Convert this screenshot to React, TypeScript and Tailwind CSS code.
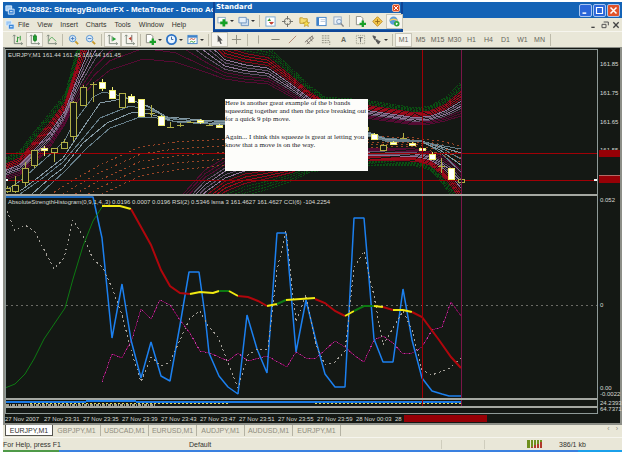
import type { ReactNode } from "react";
import clsx from "clsx";

type Point = [number, number];
// x, y of the outermost line, y of the innermost line
type BandPoint = [number, number, number];
// x, body top, body bottom, wick top, wick bottom, filled
type Candle = [number, number, number, number, number, boolean];

const MENU = ["File", "View", "Insert", "Charts", "Tools", "Window", "Help"];
const PERIODS = ["M1", "M5", "M15", "M30", "H1", "H4", "D1", "W1", "MN"];
const TABS = ["EURJPY,M1", "GBPJPY,M1", "USDCAD,M1", "EURUSD,M1", "AUDJPY,M1", "AUDUSD,M1", "EURJPY,M1"];
const DATES = [
  "27 Nov 2007",
  "27 Nov 23:31",
  "27 Nov 23:35",
  "27 Nov 23:39",
  "27 Nov 23:43",
  "27 Nov 23:47",
  "27 Nov 23:51",
  "27 Nov 23:55",
  "27 Nov 23:59",
  "28 Nov 00:03",
];

const UPPER: BandPoint[] = [
  [5, 158, 180], [20, 151, 175], [35, 131, 163], [50, 113, 147], [65, 94, 124], [70, 76, 114],
  [80, 36, 98], [95, -25, 82], [110, -60, 70], [143, -90, 59], [175, -70, 62], [205, 0, 72],
  [225, 34, 79], [245, 42, 82], [268, 47, 84], [290, 67, 96], [310, 86, 108], [325, 97, 113],
  [365, 100, 118], [415, 108, 125], [430, 106, 124], [445, 98, 121], [461, 82, 116],
];

const LOWER: BandPoint[] = [
  [165, 260, 215], [185, 240, 192], [205, 222, 170], [225, 205, 158], [245, 196, 152],
  [265, 190, 152], [290, 182, 150], [310, 172, 150], [365, 165, 148], [415, 166, 149],
  [430, 170, 152], [440, 180, 155], [450, 194, 160], [461, 212, 170],
];

const DOTTED: BandPoint[] = [
  [50, 195, 225], [70, 182, 212], [100, 165, 195], [140, 147, 176], [175, 142, 170],
  [210, 140, 167], [260, 138, 160], [365, 136, 148], [415, 138, 146], [440, 141, 154], [461, 146, 162],
];

const AVERAGES: Point[][] = [
  [[5, 191], [20, 181], [35, 168], [55, 150], [65, 140], [73, 124], [93, 97], [103, 92], [117, 95], [133, 100], [150, 108], [167, 118], [187, 120], [225, 121], [365, 131], [385, 138], [422, 141], [440, 152], [461, 172]],
  [[20, 191], [35, 180], [63, 158], [83, 128], [100, 103], [127, 98], [150, 107], [167, 117], [225, 122], [365, 132], [385, 139], [422, 142], [440, 150], [461, 165]],
  [[20, 194], [40, 180], [63, 162], [80, 142], [100, 118], [130, 106], [150, 110], [173, 119], [225, 123], [365, 133], [385, 140], [422, 141], [445, 150], [461, 159]],
  [[32, 194], [50, 178], [63, 168], [83, 143], [107, 123], [133, 112], [150, 114], [173, 121], [225, 124], [365, 134], [385, 141], [422, 141], [461, 153]],
  [[40, 194], [65, 171], [87, 148], [110, 128], [140, 117], [157, 118], [177, 122], [225, 125], [365, 135], [385, 141], [422, 142], [461, 149]],
];

const CANDLES: Candle[] = [
  [7, 188, 191, 186, 193, false], [15, 185, 191, 176, 193, false], [25, 168, 182, 162, 186, false],
  [34, 150, 165, 150, 168, false], [44, 148, 150, 146, 156, true], [54, 148, 152, 148, 162, false],
  [64, 142, 148, 139, 148, false], [73, 102, 136, 101, 141, false], [83, 87, 105, 85, 105, false],
  [93, 84, 84, 82, 102, false], [102, 82, 88, 79, 91, true], [112, 90, 98, 87, 99, true],
  [122, 93, 107, 93, 108, false], [131, 96, 102, 94, 103, true], [141, 99, 116, 99, 117, true],
  [151, 113, 113, 105, 117, false], [161, 116, 125, 115, 125, true], [170, 127, 127, 122, 127, false],
  [180, 125, 125, 123, 127, false], [190, 122, 122, 121, 123, false], [200, 120, 122, 119, 124, true],
  [209, 125, 125, 124, 126, false], [219, 125, 127, 124, 127, true], [365, 127, 130, 127, 130, false],
  [374, 134, 139, 133, 139, true], [383, 145, 150, 144, 150, false], [393, 142, 144, 141, 144, true],
  [403, 138, 138, 133, 139, false], [412, 143, 145, 142, 145, true], [422, 148, 150, 146, 151, true],
  [432, 154, 159, 152, 160, true], [441, 166, 166, 158, 173, false], [451, 168, 179, 168, 180, true],
  [461, 179, 182, 178, 182, false],
];

const RSI: Point[] = [
  [5, 197], [93, 197], [102, 238], [112, 338], [122, 284], [131, 340], [141, 378], [151, 342],
  [161, 376], [170, 381], [180, 325], [189, 272], [199, 272], [205, 315], [209, 353], [219, 376],
  [228, 387], [238, 394], [247, 315], [257, 349], [267, 373], [277, 233], [286, 233], [296, 352],
  [306, 300], [316, 341], [325, 374], [335, 387], [345, 387], [354, 218], [364, 218], [374, 339],
  [383, 362], [393, 362], [403, 289], [412, 340], [422, 378], [432, 391], [442, 394], [449, 396], [461, 396],
];

const CCI: Point[] = [
  [5, 206], [15, 231], [25, 225], [35, 232], [54, 269], [64, 258], [73, 220], [83, 236], [93, 259],
  [103, 268], [112, 288], [122, 315], [131, 350], [141, 382], [151, 357], [161, 366], [170, 362],
  [180, 340], [190, 318], [200, 311], [208, 326], [218, 337], [228, 363], [238, 388], [248, 355],
  [258, 349], [268, 349], [277, 270], [286, 231], [296, 322], [306, 295], [316, 345], [325, 365],
  [335, 362], [345, 351], [354, 268], [364, 251], [374, 296], [383, 345], [393, 328], [403, 311],
  [412, 330], [422, 370], [432, 375], [450, 368], [461, 358],
];

const LSMA: Point[] = [
  [102, 382], [112, 354], [122, 358], [132, 339], [141, 309], [151, 319], [160, 300], [170, 305],
  [180, 320], [190, 333], [200, 351], [210, 353], [228, 361], [238, 353], [248, 361], [267, 356],
  [287, 367], [296, 352], [306, 358], [316, 358], [325, 350], [335, 341], [345, 347], [355, 356],
  [364, 362], [374, 340], [383, 336], [393, 343], [403, 354], [412, 353], [422, 347], [432, 330],
  [442, 327], [451, 302], [461, 316],
];

const STRENGTH: { color: string; points: Point[] }[] = [
  { color: "#0d7a12", points: [[5, 388], [15, 384], [25, 374], [34, 359], [44, 339], [65, 308], [73, 279], [83, 246], [93, 221], [102, 207]] },
  { color: "#f2ea12", points: [[102, 206], [120, 206], [131, 209]] },
  { color: "#b0060c", points: [[131, 209], [151, 245], [161, 270], [170, 286], [180, 293], [190, 294]] },
  { color: "#f2ea12", points: [[190, 294], [200, 292], [213, 293], [219, 291]] },
  { color: "#0d7a12", points: [[219, 291], [229, 291]] },
  { color: "#f2ea12", points: [[229, 291], [238, 296]] },
  { color: "#b0060c", points: [[238, 296], [248, 297], [258, 301], [267, 306]] },
  { color: "#f2ea12", points: [[267, 306], [277, 304]] },
  { color: "#0d7a12", points: [[277, 304], [286, 300]] },
  { color: "#f2ea12", points: [[286, 300], [315, 298]] },
  { color: "#b0060c", points: [[315, 299], [325, 303], [335, 311], [345, 316]] },
  { color: "#f2ea12", points: [[345, 316], [354, 311]] },
  { color: "#0d7a12", points: [[354, 311], [364, 306], [374, 306]] },
  { color: "#f2ea12", points: [[374, 306], [383, 307]] },
  { color: "#b0060c", points: [[383, 307], [393, 310]] },
  { color: "#f2ea12", points: [[393, 310], [403, 310], [412, 312]] },
  { color: "#b0060c", points: [[412, 312], [422, 317], [439, 340], [451, 357], [461, 368]] },
];

const BAND_COLORS = [
  "#0a4d12", "#0a4d12", "#0a4d12", "#0a4d12",
  "#84081a", "#9c0a1a", "#9c0a1a", "#84081a",
  "#8f7496", "#64506a", "#8f7496", "#64506a",
  "#540b33", "#540b33", "#540b33",
];

const toPoints = (points: Point[]) => points.map((p) => p.join(",")).join(" ");

const blend = (band: BandPoint[], t: number) =>
  toPoints(band.map(([x, a, b]) => [x, Math.round((a + (b - a) * t) * 10) / 10]));

function Bands({ band }: { band: BandPoint[] }) {
  return (
    <g>
      {BAND_COLORS.map((color, i) => (
        <polyline
          key={i}
          points={blend(band, i / (BAND_COLORS.length - 1))}
          stroke={color}
          strokeDasharray={i < 4 ? "2 1" : undefined}
        />
      ))}
    </g>
  );
}

function Plot({ top, height, className, children }: { top: number; height: number; className: string; children: ReactNode }) {
  return (
    <svg
      viewBox={`6 ${top} 591 ${height}`}
      preserveAspectRatio="none"
      fill="none"
      shapeRendering="crispEdges"
      className={clsx("block w-full", className)}
    >
      {children}
      <path d={`M422.5 ${top}v${height}`} stroke="#a00006" />
      <path d={`M461.5 ${top}v${height}`} stroke="#7a1648" />
    </svg>
  );
}

function PricePlot() {
  return (
    <Plot top={50} height={144} className="h-[144px]">
      <Bands band={UPPER} />
      <Bands band={LOWER} />
      {[0, 1, 2, 3, 4].map((i) => (
        <polyline key={i} points={blend(DOTTED, i / 4)} stroke="#9a4526" strokeDasharray="2 3" />
      ))}
      {AVERAGES.map((line, i) => (
        <polyline key={i} points={toPoints(line)} stroke={i % 2 ? "#8499a3" : "#657d88"} />
      ))}
      <path d="M6 153.5h591M6 180.5h591" stroke="#a00006" />
      {CANDLES.map(([x, top, bottom, high, low, filled]) => (
        <g key={x} stroke={filled ? "#f0ee70" : "#b0ae46"}>
          <path d={`M${x + 0.5} ${high}V${low}`} />
          {top === bottom ? (
            <path d={`M${x - 3} ${top + 0.5}h7`} />
          ) : (
            <rect x={x - 2.5} y={top + 0.5} width="6" height={bottom - top} fill={filled ? "#fff" : "#141814"} />
          )}
        </g>
      ))}
      <path d="M6 180h2M594 180h3" stroke="#fff" strokeWidth="2" />
    </Plot>
  );
}

function StrengthPlot() {
  return (
    <Plot top={196} height={202} className="h-[202px]">
      <path d="M6 305.5h591" stroke="#6b6b66" strokeDasharray="2 3" />
      <polyline points={toPoints(LSMA)} stroke="#6e0d4e" />
      <polyline points={toPoints(LSMA)} stroke="#c03aa4" strokeDasharray="1 4" />
      <polyline points={toPoints(RSI)} stroke="#1c80f0" strokeWidth="1.5" strokeLinejoin="bevel" shapeRendering="auto" />
      <polyline points={toPoints(CCI)} stroke="#a39f98" strokeDasharray="2 3" />
      {STRENGTH.map(({ color, points }, i) => (
        <polyline key={i} points={toPoints(points)} stroke={color} strokeWidth={i === 0 ? 1 : 2} shapeRendering="auto" />
      ))}
    </Plot>
  );
}

function Icon({ children, className }: { children: ReactNode; className?: string }) {
  return (
    <svg viewBox="0 0 12 12" fill="none" className={clsx("shrink-0", className)}>
      {children}
    </svg>
  );
}

const axes = <path d="M2.5 1v9.500h9M1 2.500l1.500-1.500L4 2.500M10 9l1.500 1.500L10 12" stroke="#7a867a" />;
const plus = <path d="M8.500 5v7M5 8.500h7" stroke="#18a028" strokeWidth="2.500" />;
const sheet = <path d="M1.500.5h5l2 2v7h-7z" fill="#fff" stroke="#8a8a80" />;

const ICONS = {
  bars: <>{axes}<path d="M6 3v6M6 4h2M4.500 8H6M9 2v5" stroke="#2c9a35" /></>,
  candles: <>{axes}<path d="M6.500 0v9" stroke="#157a20" /><path d="M5 2h3v5H5z" fill="#22a636" stroke="#157a20" /></>,
  line: <>{axes}<path d="M3 8c2-5 4-5 5-3l3 3" stroke="#4aa552" /></>,
  zoomIn: <><circle cx="5" cy="5" r="3.500" fill="#dcebf8" stroke="#4f8fd0" /><path d="M3 5h4M5 3v4" stroke="#3f78c0" /><path d="m8 8 3 3" stroke="#c69a2c" strokeWidth="2" /></>,
  zoomOut: <><circle cx="5" cy="5" r="3.500" fill="#dcebf8" stroke="#4f8fd0" /><path d="M3 5h4" stroke="#3f78c0" /><path d="m8 8 3 3" stroke="#c69a2c" strokeWidth="2" /></>,
  scroll: <>{axes}<path d="M5.500 2v6" stroke="#888" /><path d="M6 3l4 2.500L6 8z" fill="#24a034" /></>,
  shift: <>{axes}<path d="M8.500 1v8" stroke="#666" /><path d="M8 3v4L5 5z" fill="#c23a28" /></>,
  addSheet: <>{sheet}{plus}</>,
  clock: <><circle cx="6" cy="6" r="5" fill="#eaf4ff" stroke="#2c72c4" strokeWidth="2" /><path d="M6 3v3h2" stroke="#2c5d9a" /></>,
  template: <><rect x="1" y="1.500" width="10" height="9" fill="#fff" stroke="#3f82c8" /><path d="M1 3h10" stroke="#3f82c8" strokeWidth="2" /><path d="m3 6 2-1 2 1 2-1" stroke="#c24a30" /><path d="m3 9 2-1 2 1 2-1" stroke="#2c9a35" /></>,
  cursor: <path d="m4 1 5.500 6H7l1.500 3.500-1.500.5-1.500-3.500L4 9z" fill="#555" />,
  cross: <path d="M6 1v10M1 6h10" stroke="#8a8a7c" />,
  vertical: <path d="M6 1.500v9" stroke="#a3a294" />,
  horizontal: <path d="M1.500 6h9" stroke="#77776a" />,
  trend: <path d="m2 10 8-8" stroke="#b0806c" />,
  channel: <path d="m1 9 8-7M3 11l8-7M3 7l3 4M6 4l3 4M9 2v3" stroke="#77706a" />,
  fibo: <path d="M1 2h9M1 4.500h9M1 7h9M1 9.500h7M9.500 8v4" stroke="#8a8a7c" strokeDasharray="2 1" />,
  label: <><rect x="1.500" y="1.500" width="9" height="9" stroke="#999988" strokeDasharray="1 1" /><path d="M3.500 4h5M6 4v5" stroke="#666" /></>,
  arrows: <path d="m2 2 3 1-1 3zM6 8l4 0-2 3zM5 6l3 1-2 1z" fill="#555" stroke="#555" />,
  newChart: <><rect x="1" y="1.500" width="8" height="6" fill="#fff" stroke="#88a8c0" /><path d="M7.500 3.500v8M3.500 7.500h8" stroke="#14a024" strokeWidth="3" /></>,
  profiles: <><path d="M3.500 3.500h8v7h-8z" fill="#cfdff0" stroke="#6d94c0" /><path d="M1 1.500h8v6H1z" fill="#e6f0fa" stroke="#6d94c0" /></>,
  market: <><rect x="1" y="1" width="10" height="10" fill="#fff" stroke="#78a8d0" /><path d="M2.500 5.500 5 2.500l1.500 3z" fill="#2c9a35" /><path d="m5 7 2 2 2-2z" fill="#c23a28" stroke="#c23a28" /></>,
  target: <><circle cx="6" cy="6" r="3.500" stroke="#6d6d66" /><path d="M6 0v4M6 8v4M0 6h4M8 6h4" stroke="#6d6d66" /></>,
  folder: <><path d="M1 2h3l1 1h4v5H1z" fill="#f6dd70" stroke="#c09a30" /><path d="m8 5 1 2 2.500.2L9.700 9l.6 2.500L8 10.200 5.800 11.500 6.300 9 4.500 7.200 7 7z" fill="#f9df4c" stroke="#b08a20" strokeWidth=".6" /></>,
  terminal: <><rect x="1" y="1.500" width="10" height="9" fill="#fff" stroke="#3f82c8" /><path d="M2 2v8" stroke="#3f82c8" strokeWidth="2.500" /><path d="M5 4h5M5 6h5" stroke="#bcd" /></>,
  tester: <><rect x="1" y="1" width="8" height="8" fill="#eef2f6" stroke="#8fa8c0" /><circle cx="6.500" cy="6" r="2.500" fill="#e2eefa" stroke="#7898bc" /><path d="m8.500 8 3 3.500" stroke="#888" strokeWidth="1.500" /></>,
  editor: <><path d="m6 .8 5.200 5.200L6 11.200.8 6z" fill="#f4c84a" stroke="#c08a20" /><path d="M6 3.500v5M3.500 6h5" stroke="#986a18" /></>,
  experts: <><circle cx="5" cy="5" r="4.500" fill="#5b9bd8" /><path d="M1 5c2-2 6-2 8 0" stroke="#f4d060" strokeWidth="1.500" /><circle cx="8.500" cy="8.500" r="3" fill="#2aa43a" /><path d="M7.500 7v3l2.500-1.500z" fill="#fff" /></>,
};

type IconName = keyof typeof ICONS;

function ToolButton({ icon, label, active, menu }: { icon: IconName; label: string; active?: boolean; menu?: boolean }) {
  return (
    <button
      type="button"
      aria-label={label}
      className={clsx("flex h-[15px] shrink-0 items-center justify-center", active && "border border-[#c8c6b8] bg-[#f6f5ee]", menu ? "w-[21px]" : "w-[17px]")}
    >
      <Icon className="size-[11px]">{ICONS[icon]}</Icon>
      {menu && <span className="ml-[2px] border-x-2 border-t-2 border-x-transparent border-t-[#333]" />}
    </button>
  );
}

const Divider = () => <span className="mx-[2px] h-3 w-px shrink-0 bg-[#bdbbaa]" />;

function AppIcon() {
  return (
    <Icon className="size-[10px]">
      <path d="M1 1h7v6H1z" fill="#9cc8f4" stroke="#e8f4ff" />
      <path d="M4 5h7v6H4z" fill="#3a86d8" stroke="#e8f4ff" />
      <path d="M6 8h3" stroke="#fff" />
    </Icon>
  );
}

function StandardToolbar() {
  return (
    <div className="absolute top-0 left-[210px] z-10 w-[190px] border-2 border-t-0 border-[#0e4596] bg-[#1763b5] pb-px">
      <div className="flex h-[11px] items-center justify-between px-px">
        <span className="font-['DejaVu_Sans',sans-serif] text-[7px] leading-none font-bold text-white">Standard</span>
        <button type="button" aria-label="Close toolbar" className="flex size-2 items-center justify-center rounded-xs border border-[#f0b8a0] bg-[#dc4c24]">
          <Icon className="size-[6px]"><path d="m2 2 8 8M10 2l-8 8" stroke="#fff" strokeWidth="2" /></Icon>
        </button>
      </div>
      <div className="flex h-[16px] items-center bg-[#eceadb]">
        <ToolButton icon="newChart" label="New chart" menu />
        <ToolButton icon="profiles" label="Profiles" menu />
        <Divider />
        <ToolButton icon="market" label="Market watch" />
        <ToolButton icon="target" label="Data window" />
        <ToolButton icon="folder" label="Navigator" />
        <ToolButton icon="terminal" label="Terminal" />
        <ToolButton icon="tester" label="Strategy tester" />
        <Divider />
        <ToolButton icon="addSheet" label="New order" />
        <ToolButton icon="editor" label="MetaEditor" />
        <ToolButton icon="experts" label="Expert advisors" active />
      </div>
    </div>
  );
}

function WindowButton({ label, close, children }: { label: string; close?: boolean; children: ReactNode }) {
  return (
    <button
      type="button"
      aria-label={label}
      className={clsx("flex size-[13px] items-center justify-center rounded-xs border border-[#a8c4f0]", close ? "bg-[#e0522a]" : "bg-[#2b66d9]")}
    >
      <Icon className="size-[9px]">{children}</Icon>
    </button>
  );
}

function AxisLabel({ className, children }: { className: string; children: ReactNode }) {
  return <span className={clsx("absolute left-[2px] text-[6px] leading-none", className)}>{children}</span>;
}

function Chart() {
  return (
    <main className="border-x-2 border-t border-b-2 border-[#8d8f88] bg-[#141814] pt-px text-[#d8dad5]">
      <div className="flex">
        <section className="relative flex-1 border-x border-t border-[#8f9a98]">
          <PricePlot />
          <div className="h-[2px] bg-[#a5a8a2]" />
          <p className="absolute top-[2px] left-[2px] text-[6px] leading-none">EURJPY,M1 161.44 161.45 161.44 161.45</p>
          <div className="absolute top-[49px] left-[219px] h-[72px] w-[143px] bg-[#fdfdfa] font-['Liberation_Serif',serif] text-[7px] leading-[8px] whitespace-nowrap text-[#20201e]">
            <p className="mb-[10px]">
              Here is another great example of the b bands
              <br />
              squeezing together and then the price breaking out
              <br />
              for a quick 9 pip move.
            </p>
            <p>
              Again... I think this squeeze is great at letting you
              <br />
              know that a move is on the way.
            </p>
          </div>
        </section>
        <aside className="relative w-[22px]">
          <AxisLabel className="top-[12px]">161.85</AxisLabel>
          <AxisLabel className="top-[41px]">161.75</AxisLabel>
          <AxisLabel className="top-[70px]">161.65</AxisLabel>
          <AxisLabel className="top-[98px]">161.55</AxisLabel>
          <span className="absolute top-[101px] left-px h-[7px] w-[21px] bg-[#960006]" />
          <span className="absolute top-[126px] left-px h-[8px] w-[21px] border-t border-[#b06a66] bg-[#960006]" />
        </aside>
      </div>
      <div className="flex">
        <section className="relative flex-1 border-x border-[#8f9a98]">
          <StrengthPlot />
          <div className="h-[2px] bg-[#a5a8a2]" />
          <p className="absolute top-[3px] left-[2px] text-[6px] leading-none whitespace-nowrap">
            AbsoluteStrengthHistogram(0,9,1,4,,3) 0.0196 0.0007 0.0196 RSI(2) 0.5346 lsma 3 161.4627 161.4627 CCI(6) -104.2254
          </p>
        </section>
        <aside className="relative w-[22px]">
          <AxisLabel className="top-px">0.052</AxisLabel>
          <AxisLabel className="top-[106px]">0</AxisLabel>
          <AxisLabel className="top-[189px]">0.00</AxisLabel>
          <AxisLabel className="top-[195px]">-0.0022</AxisLabel>
        </aside>
      </div>
      <div className="flex">
        <section className="relative flex-1 border-x border-b border-[#8f9a98] pb-[5px]">
          <Plot top={400} height={6} className="h-[6px]">
            <path d="M6 402h60l40-1h20l20 1h315" stroke="#1a7ae6" strokeWidth="2" />
            <path d="M6 404.500h150" stroke="#a3a190" strokeDasharray="3 1 1 1" strokeWidth="2" />
            <path d="M30 403.500h200M315 403.500h146" stroke="#ded65a" strokeDasharray="2 2" />
          </Plot>
          <div className="h-[2px] bg-[#a5a8a2]" />
        </section>
        <aside className="relative w-[22px]">
          <AxisLabel className="top-0">24.2393</AxisLabel>
          <AxisLabel className="top-[6px]">64.7371</AxisLabel>
        </aside>
      </div>
      <div className="flex h-[9px] items-center text-[6px] leading-none whitespace-nowrap">
        {DATES.map((date) => (
          <span key={date} className="w-[39px] shrink-0">{date}</span>
        ))}
        <span className="shrink-0">28</span>
        <span className="ml-[2px] h-[7px] w-[83px] bg-[#960006]" />
      </div>
    </main>
  );
}

export default function App() {
  return (
    <div className="bg-white px-[3px] pt-[2px] font-['Liberation_Sans',sans-serif] text-[#33332f]">
      <div className="relative">
        <StandardToolbar />
        <header className="flex h-[16px] items-center gap-[3px] bg-[#1463b6] px-[2px]">
          <AppIcon />
          <h1 className="flex-1 text-[8px] leading-none font-bold whitespace-nowrap text-white">
            7042882: StrategyBuilderFX - MetaTrader - Demo Ac
          </h1>
          <div className="flex gap-px">
            <WindowButton label="Minimize"><path d="M2 9.500h5" stroke="#fff" strokeWidth="2" /></WindowButton>
            <WindowButton label="Maximize"><path d="M2 2h8v8H2z" stroke="#fff" strokeWidth="1.500" /></WindowButton>
            <WindowButton label="Close" close><path d="m2 2 8 8M10 2l-8 8" stroke="#fff" strokeWidth="2" /></WindowButton>
          </div>
        </header>

        <nav className="flex h-[13px] items-center bg-[#e9e7d8] px-[2px] text-[7px] leading-none">
          <AppIcon />
          <div className="ml-[3px] flex flex-1 gap-2">
            {MENU.map((item) => (
              <button key={item} type="button">{item}</button>
            ))}
          </div>
          <div className="flex gap-[3px]">
            <button type="button" aria-label="Minimize chart"><Icon className="size-[8px]"><path d="M2 9.500h5" stroke="#444" strokeWidth="2" /></Icon></button>
            <button type="button" aria-label="Restore chart"><Icon className="size-[8px]"><path d="M4 1.500h7v5M1.500 5h6v5h-6z" stroke="#555" strokeWidth="1.500" /></Icon></button>
            <button type="button" aria-label="Close chart"><Icon className="size-[8px]"><path d="m2 2 8 8M10 2l-8 8" stroke="#444" strokeWidth="2" /></Icon></button>
          </div>
        </nav>

        <div className="flex h-[16px] items-center border-t border-[#f6f5ee] bg-[#e9e7d8] pl-[6px]">
          <ToolButton icon="bars" label="Bar chart" />
          <ToolButton icon="candles" label="Candlesticks" active />
          <ToolButton icon="line" label="Line chart" />
          <Divider />
          <ToolButton icon="zoomIn" label="Zoom in" />
          <ToolButton icon="zoomOut" label="Zoom out" />
          <Divider />
          <ToolButton icon="scroll" label="Auto scroll" active />
          <ToolButton icon="shift" label="Chart shift" active />
          <Divider />
          <ToolButton icon="addSheet" label="Indicators" menu />
          <ToolButton icon="clock" label="Periods" menu />
          <ToolButton icon="template" label="Templates" menu />
          <Divider />
          <ToolButton icon="cursor" label="Cursor" active />
          <ToolButton icon="cross" label="Crosshair" />
          <Divider />
          <ToolButton icon="vertical" label="Vertical line" />
          <ToolButton icon="horizontal" label="Horizontal line" />
          <ToolButton icon="trend" label="Trendline" />
          <ToolButton icon="channel" label="Channel" />
          <ToolButton icon="fibo" label="Fibonacci retracement" />
          <button type="button" className="h-[15px] w-[17px] text-[7px] leading-none font-bold text-[#66665c]">A</button>
          <ToolButton icon="label" label="Text label" />
          <ToolButton icon="arrows" label="Arrows" menu />
          <Divider />
          {PERIODS.map((period) => (
            <button
              key={period}
              type="button"
              className={clsx("h-[14px] w-[17px] text-[7px] leading-none text-[#66665c]", period === "M1" && "border border-[#c8c6b8] bg-[#f6f5ee]")}
            >
              {period}
            </button>
          ))}
          <Divider />
        </div>
      </div>

      <Chart />

      <div className="flex h-[12px] items-start bg-[#e9e7d8] pl-[2px] text-[7px] leading-none text-[#8f8d7e]">
        {TABS.map((tab, i) => (
          <button
            key={i}
            type="button"
            className={clsx("h-[11px] w-[48px] shrink-0", i === 0 ? "border border-t-0 border-[#55554e] bg-white text-[#33332f]" : "border-r border-[#b5b3a4]")}
          >
            {tab}
          </button>
        ))}
        <span className="flex-1" />
        <button type="button" aria-label="Scroll tabs left" className="mr-[6px]">‹</button>
        <button type="button" aria-label="Scroll tabs right" className="mr-[4px]">›</button>
      </div>

      <footer className="flex h-[13px] items-center border-t border-[#f6f5ee] bg-[#e9e7d8] text-[7px] leading-none">
        <span className="w-[186px]">For Help, press F1</span>
        <span className="flex-1">Default</span>
        <span className="h-[9px] w-[43px] border-l border-[#cfcdbd]" />
        <span className="h-[9px] w-[43px] border-l border-[#cfcdbd]" />
        <svg viewBox="0 0 15 8" className="h-2 w-[15px]">
          <path d="M0 0h3v8H0zM4 0h2v7H4zM7 0h2v5H7zM10 0h2v4h-2zM13 0h2v2h-2z" fill="#6f8f1c" />
          <path d="M4 7h2v1H4zM7 5h2v3H7zM10 4h2v4h-2zM13 2h2v6h-2z" fill="#b03a2c" />
        </svg>
        <span className="ml-[17px] w-[63px]">386/1 kb</span>
      </footer>
      <div className="flex h-[2px] bg-[#3a80e0]">
        <span className="w-[56px] bg-[#4f9a48]" />
        <span className="ml-auto w-[44px] bg-[#1ba0ea]" />
      </div>
    </div>
  );
}
